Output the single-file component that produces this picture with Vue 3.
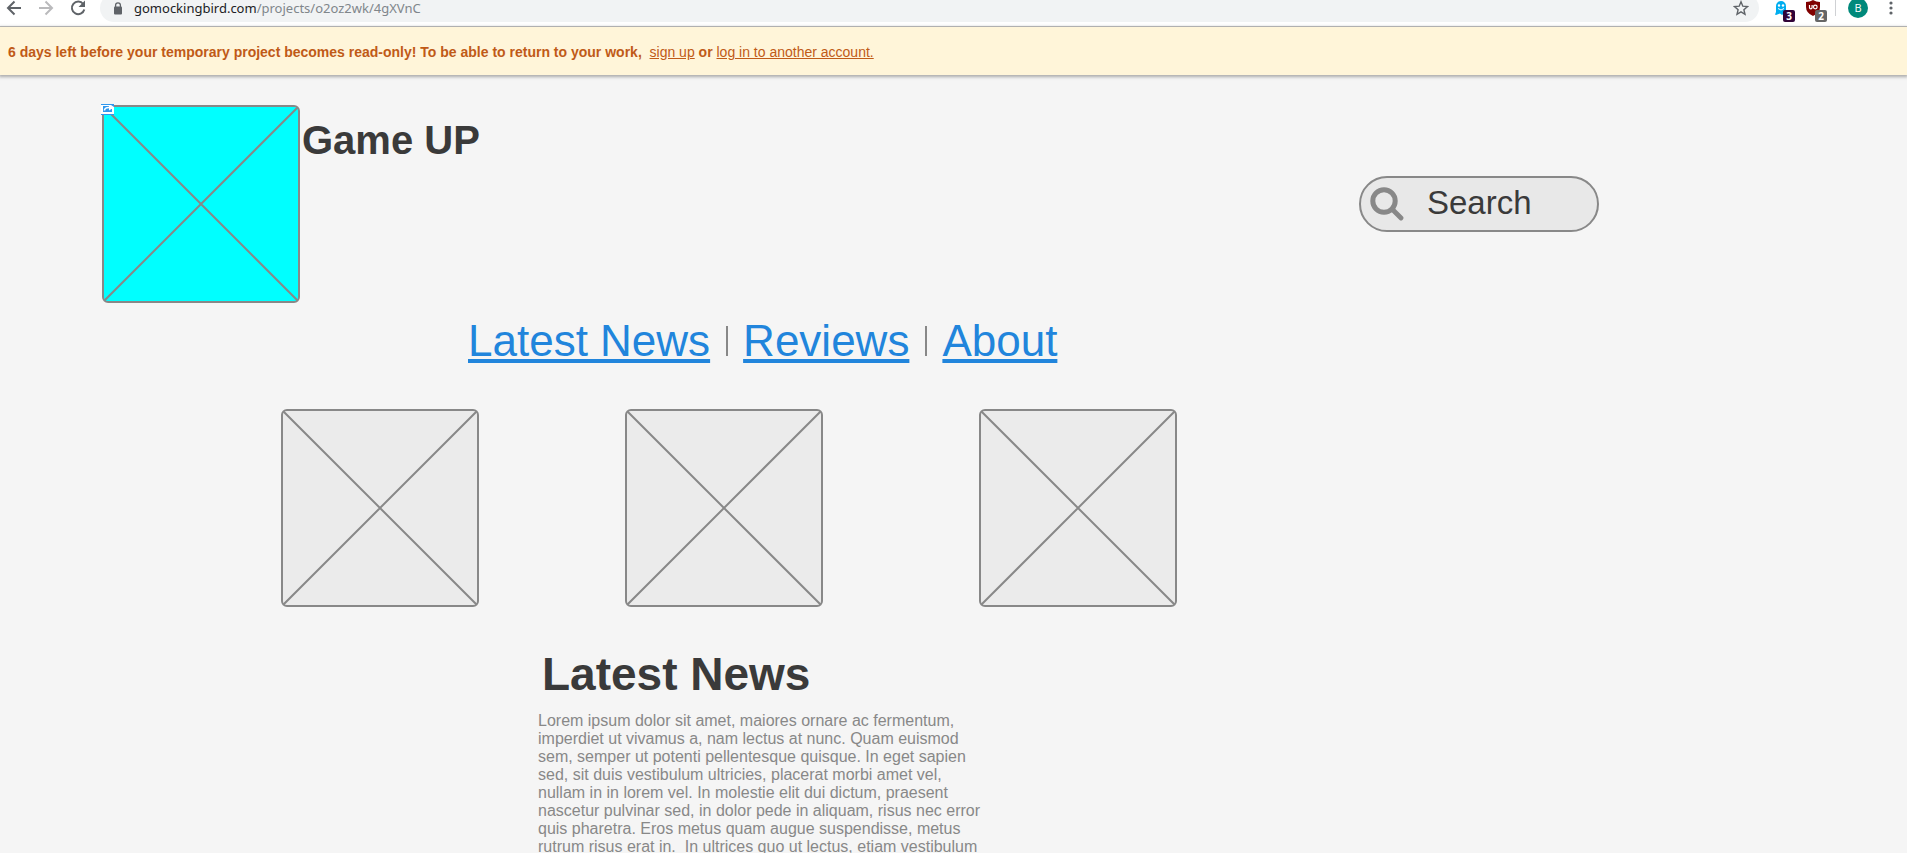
<script setup>
import { ref } from 'vue'

const address = ref('gomockingbird.com/projects/o2oz2wk/4gXVnC')
const [host, ...rest] = address.value.split('/')
const path = '/' + rest.join('/')
const links = ['Latest News', 'Reviews', 'About']
const cards = ['First picture', 'Second picture', 'Third picture']
</script>

<template>
  <div class="screen">
    <header class="toolbar">
      <button class="tool" aria-label="Back">
        <svg width="16" height="16" viewBox="0 0 16 16"><path d="M15 8H2M8.500 1.500L2 8l6.500 6.500" fill="none" stroke="#5f6368" stroke-width="2" /></svg>
      </button>
      <button class="tool" aria-label="Forward">
        <svg width="16" height="16" viewBox="0 0 16 16"><path d="M1 8h13M7.500 1.500L14 8l-6.500 6.500" fill="none" stroke="#bababc" stroke-width="2" /></svg>
      </button>
      <button class="tool reload" aria-label="Reload">
        <svg width="16" height="16" viewBox="0 0 16 16"><path d="M13.200 4A6.300 6.300 0 1 0 14.300 9.500" fill="none" stroke="#5f6368" stroke-width="2" /><path d="M15 .5V7H8.500z" fill="#5f6368" /></svg>
      </button>
      <div class="address">
        <svg width="10" height="13" viewBox="0 0 10 13"><rect x="1" y="4.500" width="8" height="8" rx="1" fill="#5f6368" /><path d="M2.600 5V3.200a2.400 2.400 0 0 1 4.800 0V5" fill="none" stroke="#5f6368" stroke-width="1.300" /></svg>
        <span class="url">{{ host }}<span class="path">{{ path }}</span></span>
        <button class="tool star" aria-label="Bookmark">
          <svg width="16" height="16" viewBox="0 0 16 16"><path d="M8 1.800l1.800 4.400 4.700.4-3.600 3.100 1.100 4.600L8 11.900l-4 2.400 1.100-4.600L1.500 6.600l4.700-.4z" fill="none" stroke="#5f6368" stroke-width="1.400" /></svg>
        </button>
      </div>
      <button class="tool ext" aria-label="Ghostery">
        <svg width="14" height="16" viewBox="0 0 14 16"><path d="M2 6a5 5 0 0 1 10 0v6l1 2-3-.5L8 15l-2-1.500L2 15l-1-.5L2 12z" fill="#00aef0" /><circle cx="5" cy="5.500" r="1.200" fill="#fff" /><circle cx="9" cy="5.500" r="1.200" fill="#fff" /><path d="M4 8.500q3 3 6 0" fill="none" stroke="#fff" /></svg>
        <span class="badge purple">3</span>
      </button>
      <button class="tool ext" aria-label="uBlock Origin">
        <svg width="14" height="16" viewBox="0 0 14 16"><path d="M7 0q3 2 7 2v5q0 6-7 9Q0 13 0 7V2q4 0 7-2z" fill="#800000" /><path d="M3.500 5v2.500a1.300 1.300 0 0 0 2.600 0V5" fill="none" stroke="#fff" stroke-width="1.200" /><circle cx="9.300" cy="7" r="1.800" fill="none" stroke="#fff" stroke-width="1.200" /></svg>
        <span class="badge grey">2</span>
      </button>
      <span class="rule"></span>
      <button class="avatar" aria-label="Profile B">B</button>
      <button class="tool menu" aria-label="Menu">
        <svg width="4" height="16" viewBox="0 0 4 16"><g fill="#5f6368"><circle cx="2" cy="3" r="1.600" /><circle cx="2" cy="8" r="1.600" /><circle cx="2" cy="13" r="1.600" /></g></svg>
      </button>
    </header>

    <div class="notice">
      <p>6 days left before your temporary project becomes read-only! To be able to return to your work,&nbsp; <a href="#">sign up</a> or <a href="#">log in to another account.</a></p>
    </div>

    <main>
      <section class="masthead">
        <div class="picture logo" role="img" aria-label="Logo">
          <svg class="cross" viewBox="0 0 194 194"><path d="M0 0l194 194M194 0L0 194" /></svg>
          <a class="share" href="#" aria-label="Open link">
            <svg width="13" height="11" viewBox="0 0 13 11"><path d="M0 0h13v11H0z" fill="#fff" /><path d="M0 0h13v1H0zM0 10h13v1H0zM2 2h7v6H2zM9 5h2v3H9z" fill="#2f97ee" /><path d="M3.500 6.500Q3.500 3.500 8 3.500" fill="none" stroke="#fff" stroke-width="1.600" /><path d="M8 1l4.500 2.800L8 6.500z" fill="#fff" /><path d="M10 1h3v2z" fill="#2f97ee" /></svg>
          </a>
        </div>
        <h1>Game UP</h1>
        <label class="search">
          <svg width="34" height="34" viewBox="0 0 34 34"><circle cx="14" cy="14" r="11.200" fill="none" stroke="#888" stroke-width="5" /><path d="M22.500 22.500l8.500 8.500" stroke="#888" stroke-width="4.800" stroke-linecap="round" /></svg>
          <input type="text" value="Search" aria-label="Search" />
        </label>
      </section>

      <nav class="links">
        <a v-for="link in links" :key="link" href="#">{{ link }}</a>
      </nav>

      <section class="gallery">
        <div v-for="card in cards" :key="card" class="picture" role="img" :aria-label="card">
          <svg class="cross" viewBox="0 0 194 194"><path d="M0 0l194 194M194 0L0 194" /></svg>
        </div>
      </section>

      <article class="news">
        <h2>Latest News</h2>
        <p>Lorem ipsum dolor sit amet, maiores ornare ac fermentum, imperdiet ut vivamus a, nam lectus at nunc. Quam euismod sem, semper ut potenti pellentesque quisque. In eget sapien sed, sit duis vestibulum ultricies, placerat morbi amet vel, nullam in in lorem vel. In molestie elit dui dictum, praesent nascetur pulvinar sed, in dolor pede in aliquam, risus nec error quis pharetra. Eros metus quam augue suspendisse, metus rutrum risus erat in.&nbsp; In ultrices quo ut lectus, etiam vestibulum</p>
      </article>
    </main>
  </div>
</template>

<style>
body {
  background: #f5f5f5;
}
</style>

<style scoped>
.screen {
  height: 100vh;
  overflow: hidden;
  font-family: "Liberation Sans", Arial, sans-serif;
  color: #3a3a3a;
}
h1, h2, p {
  margin: 0;
}
button {
  border: 0;
  padding: 0;
  background: none;
}
svg {
  display: block;
  flex: none;
}
.toolbar {
  display: flex;
  align-items: center;
  height: 28px;
  margin-top: -6px;
  padding: 0 14px 4px 6px;
  background: #fff;
  border-bottom: 1px solid #b4b4b4;
}
.tool {
  position: relative;
  flex: none;
  width: 16px;
  height: 16px;
  margin-right: 16px;
}
.reload {
  margin-right: 14px;
}
.address {
  display: flex;
  align-items: center;
  flex: 1;
  height: 28px;
  margin-right: 15px;
  padding: 0 10px 0 13px;
  border-radius: 14px;
  background: #f1f3f4;
  box-sizing: border-box;
}
.url {
  flex: 1;
  margin-left: 11px;
  font: 13px/16px "Noto Sans", "Open Sans", sans-serif;
  color: #202124;
}
.path {
  color: #80868b;
}
.star {
  margin-right: 0;
}
.ext {
  width: 14px;
  margin-right: 18px;
}
.badge {
  position: absolute;
  left: 9px;
  top: 10px;
  width: 12px;
  border-radius: 2px;
  font: bold 10px/12px "Open Sans", sans-serif;
  color: #fff;
}
.purple {
  background: #300338;
}
.grey {
  background: #666;
}
.rule {
  width: 1px;
  height: 16px;
  margin: 0 12px 0 -3px;
  background: #cfd1d4;
}
.avatar {
  flex: none;
  width: 20px;
  height: 20px;
  border-radius: 50%;
  background: #00897b;
  font: 11px/20px "Open Sans", sans-serif;
  color: #fff;
}
.menu {
  width: 4px;
  margin: 0 0 0 21px;
}
.notice {
  height: 48px;
  background: #fff5d9;
  box-shadow: 0 1px 3px 1px #aaa;
  font-size: 14px;
  font-weight: bold;
  line-height: 16px;
  color: #c05a17;
}
.notice p {
  padding: 17px 8px 0;
}
.notice a {
  font-weight: normal;
  color: inherit;
}
.masthead {
  display: flex;
  padding: 30px 308px 0 102px;
}
.picture {
  position: relative;
  width: 198px;
  height: 198px;
  box-sizing: border-box;
  border: 2px solid #888;
  border-radius: 6px;
  background: #ebebeb;
}
.logo {
  flex: none;
  background: #0ff;
}
.cross {
  width: 100%;
  height: 100%;
  stroke: #888;
  stroke-width: 2;
}
.share {
  position: absolute;
  left: -3px;
  top: -3px;
}
h1 {
  margin: 12px 0 0 2px;
  font-size: 40px;
  line-height: 46px;
}
.search {
  display: flex;
  align-items: center;
  width: 240px;
  height: 56px;
  margin: 71px 0 0 auto;
  padding: 0 9px;
  box-sizing: border-box;
  border: 2px solid #888;
  border-radius: 28px;
  background: #e8e8e8;
}
.search input {
  width: 100%;
  min-width: 0;
  margin-left: 23px;
  padding: 0 0 2px;
  border: 0;
  outline: 0;
  background: none;
  font: 33px/40px "Liberation Sans", Arial, sans-serif;
  color: #3a3a3a;
}
.links {
  display: flex;
  align-items: center;
  padding: 13px 0 0 468px;
}
.links a {
  font-size: 44px;
  line-height: 50px;
  color: #2185dc;
}
.links a + a::before {
  content: "";
  display: inline-block;
  width: 2px;
  height: 30px;
  margin: 0 15px 0 16px;
  background: #888;
}
.gallery {
  display: grid;
  grid-template-columns: 344fr 354fr 928fr;
  padding: 43px 0 0 281px;
}
.news {
  padding: 41px 0 0 538px;
}
h2 {
  padding-left: 4px;
  font-size: 46px;
  line-height: 52px;
}
.news p {
  max-width: 448px;
  padding-top: 12px;
  font-size: 16px;
  line-height: 18px;
  color: #888;
}
</style>
